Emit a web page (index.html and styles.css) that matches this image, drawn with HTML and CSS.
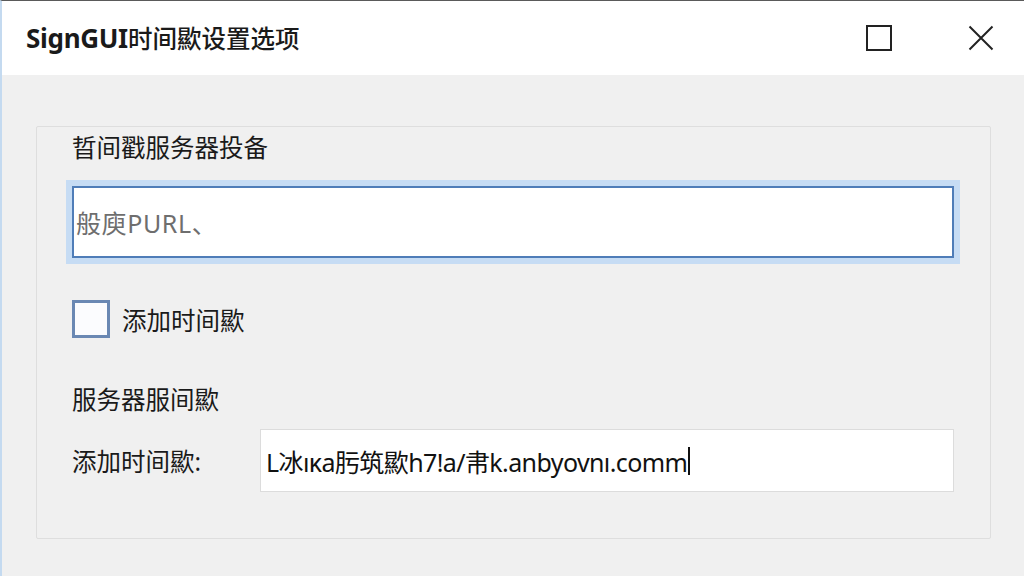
FILE: index.html
```html
<!DOCTYPE html>
<html lang="zh">
<head>
<meta charset="utf-8">
<title>SignGUI时间歞设置选项</title>
<link rel="stylesheet" href="styles.css">
</head>
<body>
<div class="window">
  <header class="titlebar">
    <h1 class="title">SignGUI<span class="title-cjk">时间歞设置选项</span></h1>
    <div class="controls">
      <button class="ctrl" aria-label="最大化">
        <svg width="26" height="26" viewBox="0 0 26 26"><rect x="1" y="1" width="24" height="24" fill="none" stroke="#222" stroke-width="2"/></svg>
      </button>
      <button class="ctrl" aria-label="关闭">
        <svg width="26" height="26" viewBox="0 0 26 26"><path d="M1.5 1.5 L24.5 24.5 M24.5 1.5 L1.5 24.5" stroke="#222" stroke-width="2" fill="none"/></svg>
      </button>
    </div>
  </header>
  <main class="content">
    <section class="group">
      <div class="label first">晢间戳服务器投备</div>
      <div class="url-input"><span class="placeholder">般庾PURL、</span></div>
      <label class="check-row">
        <span class="checkbox"></span>
        <span class="check-text">添加时间歞</span>
      </label>
      <div class="label second">服务器服间歞</div>
      <div class="field-row">
        <span class="field-label">添加时间歞:</span>
        <div class="text-input"><span class="value">L冰ıĸa肟筑歞h7!a/帇k.anbyovnı.comm</span><span class="caret"></span></div>
      </div>
    </section>
  </main>
</div>
</body>
</html>
```

FILE: styles.css
```css
* { box-sizing: border-box; }
html, body {
  margin: 0;
  padding: 0;
  width: 1024px;
  height: 576px;
  overflow: hidden;
  background: #f0f0f0;
  font-family: "Noto Sans", "Noto Sans CJK SC", sans-serif;
  color: #1e1e1e;
}
.window {
  height: 576px;
  border-left: 2px solid #c4daf0;
  border-top: 1px solid #5a5a5a;
  display: flex;
  flex-direction: column;
}
.titlebar {
  height: 74px;
  background: #ffffff;
  display: flex;
  align-items: center;
  justify-content: space-between;
  padding: 0 30px 0 24px;
  flex-shrink: 0;
}
.title {
  margin: 0;
  font-size: 26px;
  font-weight: 700;
  color: #1a1a1a;
  letter-spacing: -0.3px;
  font-family: "Noto Sans", "Noto Sans CJK SC", sans-serif;
}
.title-cjk {
  font-size: 24.5px;
  font-weight: 500;
  letter-spacing: 0;
}
.controls {
  display: flex;
  align-items: center;
  gap: 76px;
}
.ctrl {
  border: 0;
  background: transparent;
  padding: 0;
  width: 26px;
  height: 26px;
  display: block;
}
.ctrl svg { display: block; }
.content {
  flex: 1;
  padding: 51px 33px 37px 34px;
}
.group {
  height: 413px;
  border: 1px solid #dedede;
  border-radius: 2px;
  padding: 6px 36px 0 35px;
  display: flex;
  flex-direction: column;
}
.label {
  font-size: 24.5px;
  line-height: 30px;
  color: #1a1a1a;
}
.url-input {
  margin-top: 23px;
  height: 72px;
  background: #fff;
  border: 2px solid #4f7db8;
  box-shadow: 0 0 0 6px #c6dcf4;
  display: flex;
  align-items: center;
  padding-left: 2px;
}
.placeholder {
  font-size: 25px;
  color: #6e6e6e;
  letter-spacing: 0.6px;
}
.check-row {
  margin-top: 42px;
  display: flex;
  align-items: center;
  gap: 12px;
}
.checkbox {
  width: 38px;
  height: 38px;
  background: #fbfcfe;
  border: 3px solid #6a88b3;
  display: block;
}
.check-text {
  font-size: 24.5px;
  color: #1a1a1a;
}
.label.second {
  margin-top: 47px;
}
.field-row {
  margin-top: 14px;
  display: flex;
  align-items: center;
}
.field-label {
  width: 188px;
  font-size: 24.5px;
  color: #1a1a1a;
}
.text-input {
  flex: 1;
  height: 63px;
  background: #fff;
  border: 1px solid #dcdcdc;
  display: flex;
  align-items: center;
  padding-left: 5px;
}
.value {
  font-size: 25px;
  color: #111;
  letter-spacing: -0.6px;
}
.caret {
  width: 2px;
  height: 28px;
  background: #111;
  margin-left: 1px;
}
```
